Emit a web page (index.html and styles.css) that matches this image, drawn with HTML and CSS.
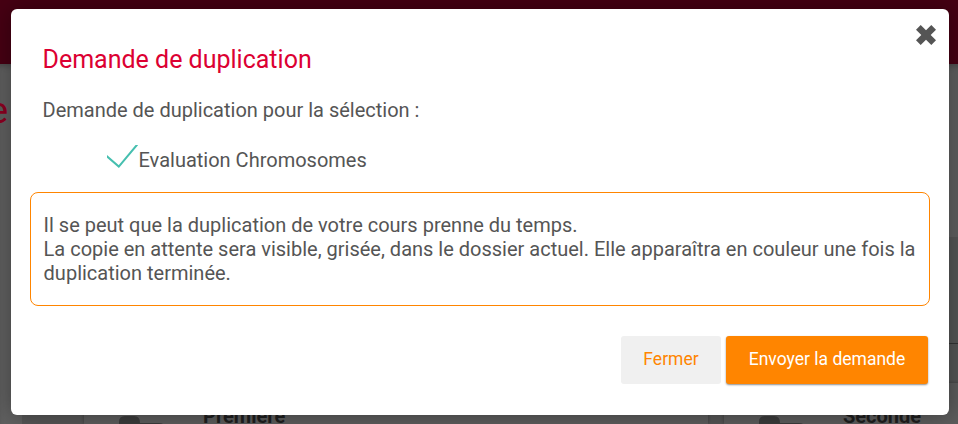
FILE: index.html
```html
<!DOCTYPE html>
<html lang="fr">
<head>
<meta charset="utf-8">
<title>Demande de duplication</title>
<link rel="stylesheet" href="styles.css">
</head>
<body>
<div class="page">
  <header class="topbar"></header>
  <main class="content">
    <div class="heading">e</div>
    <div class="panel">
      <div class="panel-head"></div>
      <div class="cards">
        <div class="card">
          <svg class="folder" width="62" height="34" viewBox="0 0 62 34"><path d="M0 6Q0 0 6 0H15Q21 0 21 7H40Q46 7 46 13V34H0Z" fill="#3b3b3b"/></svg>
          <span class="card-name">Première</span>
        </div>
        <div class="card">
          <svg class="folder" width="62" height="34" viewBox="0 0 62 34"><path d="M0 6Q0 0 6 0H15Q21 0 21 7H40Q46 7 46 13V34H0Z" fill="#3b3b3b"/></svg>
          <span class="card-name">Seconde</span>
        </div>
      </div>
    </div>
  </main>
</div>
<section class="dialog" role="dialog">
  <span class="close"><svg width="22" height="22" viewBox="0 0 22 22"><path d="M5.7 1L11 6.3L16.3 1L21 5.7L15.7 11L21 16.3L16.3 21L11 15.7L5.7 21L1 16.3L6.3 11L1 5.7Z" fill="#555"/></svg></span>
  <h2 class="title">Demande de duplication</h2>
  <p class="intro">Demande de duplication pour la sélection :</p>
  <div class="selection">
    <svg class="check" width="31" height="23" viewBox="0 0 31 23"><path d="M-1 10.5L11.8 21.6L31.5 -2" fill="none" stroke="#46bfaf" stroke-width="2"/></svg>
    <span>Evaluation Chromosomes</span>
  </div>
  <div class="notice">Il se peut que la duplication de votre cours prenne du temps.<br>La copie en attente sera visible, grisée, dans le dossier actuel. Elle apparaîtra en couleur une fois la duplication terminée.</div>
  <div class="actions">
    <button class="btn btn-close">Fermer</button>
    <button class="btn btn-send">Envoyer la demande</button>
  </div>
</section>
</body>
</html>
```
FILE: styles.css
```css
* { box-sizing: border-box; }
body {
  margin: 0;
  height: 424px;
  overflow: hidden;
  font-family: Roboto, "Liberation Sans", sans-serif;
  color: #555;
}
.page { height: 424px; overflow: hidden; background: #606060; }
.topbar { height: 64px; background: #460013; }
.content {
  height: 360px;
  padding-top: 24px;
  box-shadow: inset 0 5px 6px -3px rgba(0, 0, 0, .25);
}
.heading {
  width: 8px;
  height: 40px;
  display: flex;
  justify-content: flex-end;
  font-size: 37px;
  line-height: 46px;
  color: #8a0020;
}
.panel { margin-top: 109px; margin-left: 22px; background: #555; }
.panel-head { height: 107px; border-bottom: 1px solid #333; }
.cards { display: flex; gap: 16px; height: 80px; padding: 39px 0 0 62px; }
.card {
  flex: 0 0 624px;
  display: flex;
  padding: 33px 0 0 35px;
  background: #5c5c5c;
  box-shadow: 0 0 3px rgba(0, 0, 0, .3);
}
.card-name {
  margin: -12px 0 0 22px;
  font-size: 20px;
  font-weight: 700;
  line-height: 24px;
  color: #1e1e1e;
}
.folder { flex: none; }

.dialog {
  position: absolute;
  top: 9px;
  left: 11px;
  width: 938px;
  height: 406px;
  padding: 35px 19px 0;
  border-radius: 6px;
  background: #fff;
  box-shadow: 0 0 22px rgba(0, 0, 0, .35);
}
.close { position: absolute; top: 15px; right: 12px; width: 22px; height: 22px; }
.close svg { display: block; }
.title {
  margin: 0 0 0 12.5px;
  font-size: 25px;
  font-weight: 400;
  line-height: 32px;
  color: #dc0032;
}
.intro { margin: 22px 0 0 12.5px; font-size: 20px; line-height: 24px; }
.selection {
  display: flex;
  margin: 23px 0 0 77px;
  height: 30px;
  font-size: 20px;
  line-height: 30px;
}
.check { flex: none; margin-right: .5px; }
.notice {
  height: 114px;
  margin-top: 17px;
  padding: 20px 12px 0 12.6px;
  border: 1px solid #ff8500;
  border-radius: 8px;
  font-size: 20px;
  line-height: 24px;
}
.actions {
  display: flex;
  justify-content: flex-end;
  gap: 5px;
  margin: 30px 2px 0 0;
}
.btn {
  height: 48px;
  padding: 0 0 3px;
  border: 0;
  border-radius: 3px;
  font: 400 17.5px Roboto, "Liberation Sans", sans-serif;
}
.btn-close { width: 100px; background: #f0f0f0; color: #ff8500; }
.btn-send {
  width: 202px;
  background: #ff8500;
  color: #fff;
  box-shadow: 0 1px 2px rgba(0, 0, 0, .45);
}
```
